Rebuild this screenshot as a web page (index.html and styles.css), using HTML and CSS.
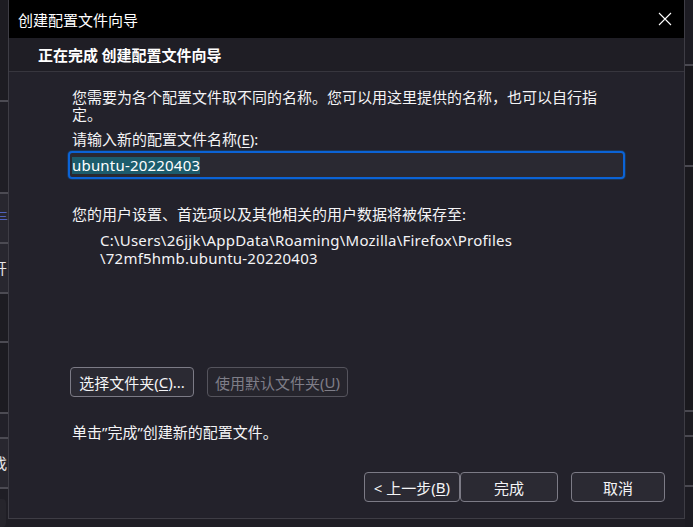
FILE: index.html
```html
<!DOCTYPE html>
<html lang="zh-CN">
<head>
<meta charset="utf-8">
<title>创建配置文件向导</title>
<link rel="stylesheet" href="styles.css">
</head>
<body>
<div class="desk">
  <div class="strip strip-left">
    <div class="seg s1"></div>
    <div class="ln"></div>
    <div class="seg s2"></div>
    <div class="ln"></div>
    <div class="seg s3"><span class="frag frag-blue">三</span></div>
    <div class="ln"></div>
    <div class="seg s4"><span class="frag">开</span></div>
    <div class="ln"></div>
    <div class="seg s5"></div>
    <div class="ln"></div>
    <div class="seg s6"></div>
    <div class="ln"></div>
    <div class="seg s7"></div>
    <div class="ln"></div>
    <div class="seg s8"><span class="frag">找</span></div>
    <div class="ln"></div>
    <div class="seg s9"><div class="nub"></div></div>
  </div>

  <div class="center">
    <div class="dialog">
      <div class="titlebar">
        <span class="title">创建配置文件向导</span>
        <svg class="close" width="14" height="14" viewBox="0 0 14 14">
          <path d="M1 1 L13 13 M13 1 L1 13" stroke="#ffffff" stroke-width="1.1" fill="none"/>
        </svg>
      </div>
      <div class="header">正在完成 创建配置文件向导</div>
      <div class="content">
        <p class="intro">您需要为各个配置文件取不同的名称。您可以用这里提供的名称，也可以自行指定。</p>
        <p class="label">请输入新的配置文件名称(<u>E</u>):</p>
        <div class="input"><span class="sel">ubuntu-20220403</span></div>
        <p class="saveto">您的用户设置、首选项以及其他相关的用户数据将被保存至:</p>
        <div class="path">C:\Users\26jjk\AppData\Roaming\Mozilla\Firefox\Profiles<br>\72mf5hmb.ubuntu-20220403</div>
        <div class="folder-btns">
          <button class="btn btn-choose">选择文件夹(<u>C</u>)...</button>
          <button class="btn btn-default" disabled>使用默认文件夹(<u>U</u>)</button>
        </div>
        <p class="finish">单击”完成”创建新的配置文件。</p>
      </div>
      <div class="footer">
        <button class="btn btn-back">&lt; 上一步(<u>B</u>)</button>
        <button class="btn btn-done">完成</button>
        <button class="btn btn-cancel">取消</button>
      </div>
    </div>
  </div>

  <div class="strip strip-right">
    <div class="seg r1"></div>
    <div class="ln"></div>
    <div class="seg r2"></div>
    <div class="ln"></div>
    <div class="seg r3"></div>
    <div class="ln"></div>
    <div class="seg r4"></div>
    <div class="ln"></div>
    <div class="seg r5"></div>
    <div class="ln"></div>
    <div class="seg r6"></div>
  </div>
</div>
</body>
</html>
```

FILE: styles.css
```css
* { box-sizing: border-box; }

html, body {
  margin: 0;
  padding: 0;
  background: #1d1c23;
  width: 693px;
  height: 527px;
  overflow: hidden;
}

body {
  font-family: "Noto Sans", "Noto Sans CJK SC", sans-serif;
  font-size: 15px;
  color: #f4f4f6;
}

.desk {
  display: grid;
  grid-template-columns: 8px 677px 8px;
  height: 527px;
}

/* background strips */
.strip {
  display: flex;
  flex-direction: column;
  overflow: hidden;
}
.ln {
  height: 2px;
  background: #4c4b53;
  flex: none;
}
.seg { flex: none; position: relative; overflow: hidden; }
.s1 { height: 100px; background: #1d1c22; }
.s2 { height: 90px; background: #1f1e25; }
.s3 { height: 48px; background: #28272f; }
.s4 { height: 48px; background: #28272f; }
.s5 { height: 47px; background: #1d1c22; }
.s6 { height: 69px; background: #1c1b21; }
.s7 { height: 23px; background: #222129; }
.s8 { height: 48px; background: #28272f; }
.s9 { height: 40px; background: #1f1e25; }
.frag {
  display: block;
  font-family: "Noto Sans CJK SC", sans-serif;
  font-size: 15px;
  line-height: 48px;
  margin-left: -8px;
  color: #e8e8ea;
}
.frag-blue { color: #5a6fd8; font-size: 10px; margin-left: -2px; line-height: 44px; }
.nub {
  margin: 10px 0 0 -6px;
  width: 12px;
  height: 28px;
  border-radius: 4px;
  background: #26252c;
}

.strip-right .ln { background: #4a4951; }
.r1 { height: 64px; background: #1d1c23; }
.r2 { height: 99px; background: #18171c; }
.r3 { height: 243px; background: #1a191e; }
.r4 { height: 23px; background: #1d1c22; }
.r5 { height: 48px; background: #1d1c22; }
.r6 { height: 40px; background: #1d1c23; }

/* dialog */
.center {
  background: #1f1e25;
}
.dialog {
  height: 519px;
  display: flex;
  flex-direction: column;
  background: #23222b;
  border-left: 1px solid #3e3d45;
  border-right: 1px solid #3e3d45;
  border-bottom: 1px solid #3e3d45;
}

.titlebar {
  height: 38px;
  flex: none;
  background: #000000;
  display: flex;
  align-items: center;
  justify-content: space-between;
  padding: 0 12px 0 9px;
}
.title {
  font-family: "Noto Sans CJK SC", sans-serif;
  font-size: 15px;
  color: #ffffff;
}
.close { display: block; }

.header {
  height: 34px;
  flex: none;
  background: #1f1e25;
  border-bottom: 1px solid #37363e;
  display: flex;
  align-items: center;
  padding-left: 29px;
  font-family: "Noto Sans CJK SC", sans-serif;
  font-weight: bold;
  font-size: 15px;
  color: #ffffff;
}

.content {
  padding: 17px 40px 0 63px;
}
.content p { margin: 0; }
.intro {
  line-height: 17px;
  width: 540px;
}
.label {
  margin-top: 8px !important;
  line-height: 17px;
}
u { text-underline-offset: 2px; text-decoration-thickness: 1px; }

.input {
  margin: 3px 0 0 -4px;
  width: 557px;
  height: 28px;
  border: 2px solid #0b63d6;
  border-radius: 4px;
  box-shadow: 0 0 0 1px #1b3556;
  background: #2a2932;
  display: flex;
  align-items: center;
  padding-left: 2px;
}
.sel {
  background: #1c5c6c;
  color: #ffffff;
  line-height: 17px;
  height: 17px;
  display: inline-block;
  letter-spacing: 0.2px;
}

.saveto {
  margin-top: 27px !important;
  line-height: 17px;
}
.path {
  margin-top: 8px;
  padding-left: 28px;
  line-height: 18px;
  letter-spacing: 0.22px;
}

.folder-btns {
  margin: 100px 0 0 -2px;
  display: flex;
  gap: 13px;
}

.btn {
  font-family: "Noto Sans", "Noto Sans CJK SC", sans-serif;
  font-size: 15px;
  color: #f4f4f6;
  background: #2b2a33;
  border: 1px solid #7c7b86;
  border-radius: 4px;
  height: 30px;
  padding: 0;
  display: flex;
  align-items: center;
  justify-content: center;
}
.btn-choose { width: 124px; }
.btn-default {
  width: 141px;
  color: #7f7e88;
  border-color: #55545d;
  background: #26252d;
}

.finish {
  margin-top: 27px !important;
  line-height: 17px;
}

.footer {
  margin-top: auto;
  padding: 0 19px 16px 0;
  display: flex;
  justify-content: flex-end;
}
.btn-back { width: 96px; }
.btn-done { width: 98px; margin-left: 0; }
.btn-cancel { width: 94px; margin-left: 13px; }
```
